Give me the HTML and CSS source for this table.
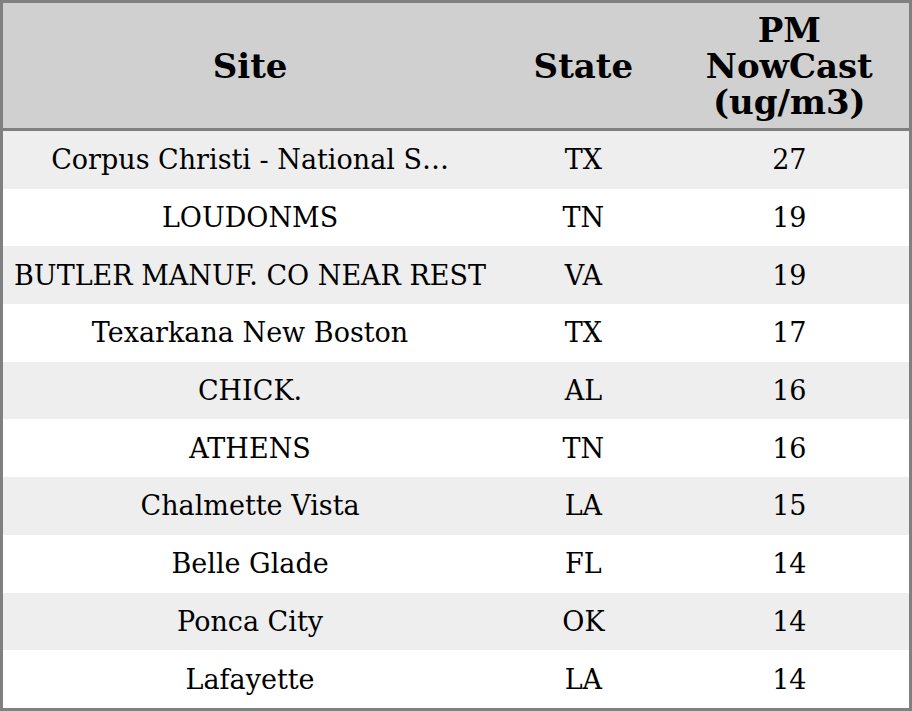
FILE: index.html
```html
<!DOCTYPE html>
<html>
<head>
<meta charset="utf-8">
<link rel="stylesheet" href="styles.css">
</head>
<body>
<table class="grid">
  <colgroup>
    <col class="c-site">
    <col class="c-state">
    <col class="c-pm">
  </colgroup>
  <thead>
    <tr><th>Site</th><th>State</th><th>PM<br>NowCast<br>(ug/m3)</th></tr>
  </thead>
  <tbody>
    <tr><td>Corpus Christi - National S…</td><td>TX</td><td>27</td></tr>
    <tr><td>LOUDONMS</td><td>TN</td><td>19</td></tr>
    <tr><td>BUTLER MANUF. CO NEAR REST</td><td>VA</td><td>19</td></tr>
    <tr><td>Texarkana New Boston</td><td>TX</td><td>17</td></tr>
    <tr><td>CHICK.</td><td>AL</td><td>16</td></tr>
    <tr><td>ATHENS</td><td>TN</td><td>16</td></tr>
    <tr><td>Chalmette Vista</td><td>LA</td><td>15</td></tr>
    <tr><td>Belle Glade</td><td>FL</td><td>14</td></tr>
    <tr><td>Ponca City</td><td>OK</td><td>14</td></tr>
    <tr><td>Lafayette</td><td>LA</td><td>14</td></tr>
  </tbody>
</table>
</body>
</html>
```
FILE: styles.css
```css
html, body {
  margin: 0;
  padding: 0;
  background: #ffffff;
}
.grid {
  width: 912px;
  height: 711px;
  border-collapse: collapse;
  table-layout: fixed;
  border: 3px solid #808080;
  font-family: "DejaVu Serif", serif;
  color: #000;
}
.c-site { width: 494px; }
.c-state { width: 172px; }
.c-pm { width: 240px; }
.grid th {
  background: #d0d0d0;
  font-weight: bold;
  font-size: 34px;
  line-height: 36px;
  height: 125px;
  padding: 0 2px;
  border-bottom: 3px solid #808080;
  text-align: center;
  vertical-align: middle;
}
.grid td {
  font-size: 27px;
  height: 57px;
  padding: 0 2px;
  text-align: center;
  vertical-align: middle;
  white-space: nowrap;
  overflow: hidden;
}
.grid tbody tr:nth-child(odd) td {
  background: #eeeeee;
}
```
